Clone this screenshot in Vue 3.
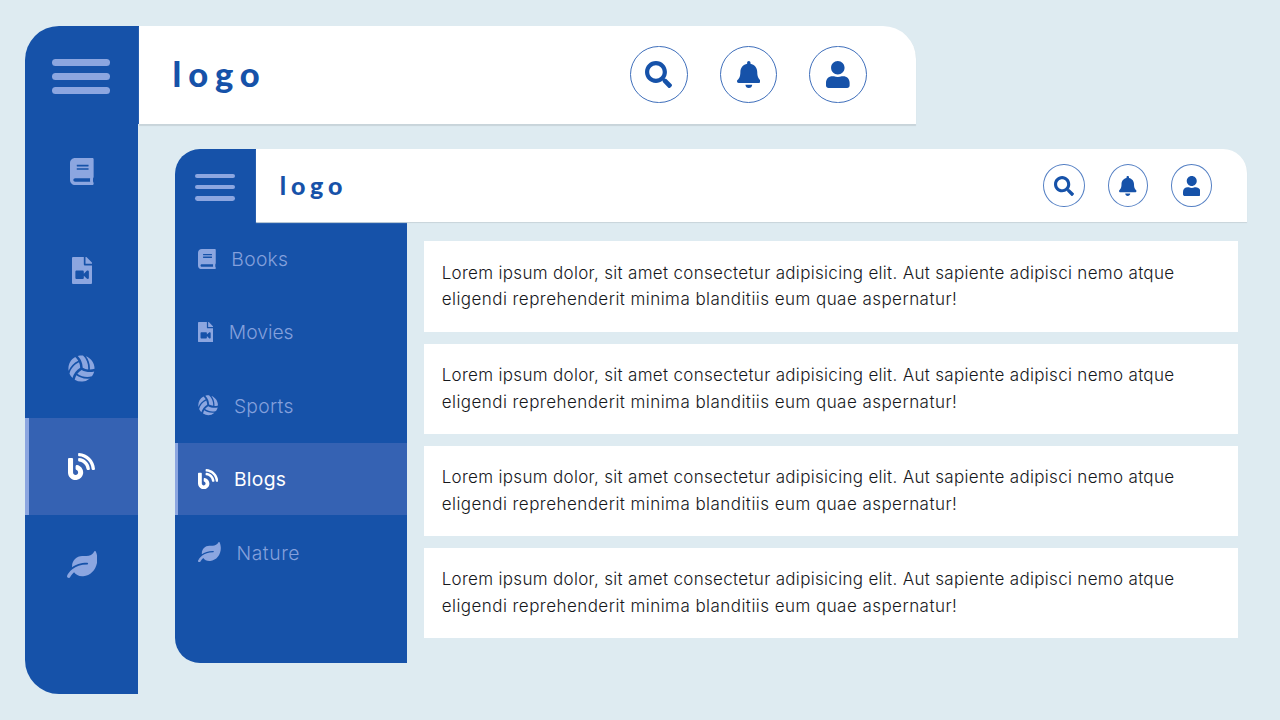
<script setup>
const icons = {
  search: { w: 512, d: 'M505 442.7L405.3 343c-4.5-4.5-10.6-7-17-7H372c27.6-35.3 44-79.7 44-128C416 93.1 322.9 0 208 0S0 93.1 0 208s93.1 208 208 208c48.3 0 92.7-16.4 128-44v16.3c0 6.4 2.5 12.5 7 17l99.7 99.7c9.4 9.4 24.6 9.4 33.9 0l28.3-28.3c9.4-9.4 9.4-24.6.1-34zM208 336c-70.7 0-128-57.2-128-128 0-70.7 57.2-128 128-128 70.7 0 128 57.2 128 128 0 70.7-57.2 128-128 128z' },
  bell: { w: 448, d: 'M224 512c35.32 0 63.97-28.65 63.97-64H160.03c0 35.35 28.65 64 63.97 64zm215.39-149.71c-19.32-20.76-55.47-51.99-55.47-154.29 0-77.7-54.48-139.9-127.94-155.16V32c0-17.67-14.32-32-31.98-32s-31.98 14.33-31.98 32v20.84C118.56 68.1 64.08 130.3 64.08 208c0 102.3-36.15 133.53-55.47 154.29-6 6.45-8.66 14.16-8.61 21.71.11 16.4 12.98 32 32.1 32h383.8c19.12 0 32-15.6 32.1-32 .05-7.55-2.61-15.27-8.61-21.71z' },
  user: { w: 448, d: 'M224 256c70.7 0 128-57.3 128-128S294.7 0 224 0 96 57.3 96 128s57.3 128 128 128zm89.6 32h-16.7c-22.2 10.2-46.9 16-72.9 16s-50.6-5.8-72.9-16h-26.7C50 288 0 338 0 412.4V464c0 26.5 21.5 48 48 48h352c26.5 0 48-21.5 48-48v-51.6c0-74.4-50-124.4-124.4-124.4z' },
  book: { w: 448, d: 'M448 360V24c0-13.3-10.7-24-24-24H96C43 0 0 43 0 96v320c0 53 43 96 96 96h328c13.3 0 24-10.7 24-24v-16c0-7.5-3.5-14.3-8.9-18.7-4.2-15.4-4.2-59.3 0-74.7 5.4-4.3 8.9-11.1 8.9-18.6zM128 134c0-3.3 2.7-6 6-6h212c3.3 0 6 2.7 6 6v20c0 3.3-2.7 6-6 6H134c-3.3 0-6-2.7-6-6v-20zm0 64c0-3.3 2.7-6 6-6h212c3.3 0 6 2.7 6 6v20c0 3.3-2.7 6-6 6H134c-3.3 0-6-2.7-6-6v-20zm253.4 250H96c-17.7 0-32-14.3-32-32 0-17.6 14.4-32 32-32h285.4c-1.9 17.1-1.9 46.9 0 64z' },
  film: { w: 384, d: 'M384 121.941V128H256V0h6.059c6.365 0 12.47 2.529 16.971 7.029l97.941 97.941A24.005 24.005 0 0 1 384 121.941zM224 136c0 13.2 10.8 24 24 24h136v328c0 13.255-10.745 24-24 24H24c-13.255 0-24-10.745-24-24V24C0 10.745 10.745 0 24 0h200v136zm96 144.016v111.963c0 21.445-25.943 31.998-40.971 16.971L224 353.941V392c0 13.255-10.745 24-24 24H88c-13.255 0-24-10.745-24-24V280c0-13.255 10.745-24 24-24h112c13.255 0 24 10.745 24 24v38.059l55.029-55.013c15.011-15.01 40.971-4.491 40.971 16.97z' },
  ball: { w: 512, d: 'M231.39 243.48a285.56 285.56 0 0 0-22.7-105.7c-90.8 42.4-157.5 122.4-180.3 216.8a249 249 0 0 0 56.9 81.1 333.87 333.87 0 0 1 146.1-192.2zm-36.9-134.4a284.23 284.23 0 0 0-57.4-70.7c-91 49.8-144.8 152.9-125 262.2 33.4-83.1 98.4-152 182.4-191.5zm187.6 165.1c8.6-99.8-27.3-197.5-97.5-264.4-14.7-1.7-51.6-5.5-98.9 8.5A333.87 333.87 0 0 1 279.19 241a285 285 0 0 0 102.9 33.18zm-124.7 9.5a286.33 286.33 0 0 0-80.2 72.6c82 57.3 184.5 75.1 277.5 47.8a247.15 247.15 0 0 0 42.2-89.9 336.1 336.1 0 0 1-80.9 10.4c-54.6-.1-108.9-14.1-158.6-40.9zm-98.3 99.7c-15.2 26-25.7 54.4-32.1 84.2a247.07 247.07 0 0 0 289-22.1c-112.9 16.1-203.3-24.8-256.9-62.1zm180.3-360.6c55.3 70.4 82.5 161.2 74.6 253.6a286.59 286.59 0 0 0 89.7-14.2c0-2 .3-4 .3-6 0-107.8-68.7-199.1-164.6-233.4z' },
  blog: { w: 512, d: 'M172.2 226.8c-14.6-2.9-28.2 8.9-28.2 23.8V301c0 10.2 7.1 18.4 16.7 22 18.2 6.8 31.3 24.4 31.3 45 0 26.5-21.5 48-48 48s-48-21.5-48-48V120c0-13.3-10.7-24-24-24H24c-13.3 0-24 10.7-24 24v248c0 89.5 82.1 160.2 175 140.7 54.4-11.4 98.3-55.4 109.7-109.7 17.4-82.9-37-157.2-112.5-172.2zM209 0c-9.2-.5-17 6.8-17 16v31.6c0 8.5 6.6 15.5 15 15.9 129.4 7 233.4 112 240.9 241.5.5 8.4 7.5 15 15.9 15h32.1c9.2 0 16.5-7.8 16-17C503.4 139.8 372.2 8.6 209 0zm.3 96c-9.3-.7-17.3 6.7-17.3 16.1v32.1c0 8.4 6.5 15.3 14.8 15.9 76.8 6.3 138 68.2 144.9 145.2.8 8.3 7.6 14.7 15.9 14.7h32.2c9.3 0 16.8-8 16.1-17.3-8.4-110.1-96.5-198.2-206.6-206.7z' },
  leaf: { w: 576, d: 'M546.2 9.7c-5.6-12.5-21.6-13-28.3-1.2C486.9 62.4 431.4 96 368 96h-80C182 96 96 182 96 288c0 7 .8 13.7 1.5 20.5C161.3 262.8 253.4 224 384 224c8.8 0 16 7.2 16 16s-7.2 16-16 16C132.6 256 26 410.1 2.4 468c-6.6 16.3 1.2 34.9 17.5 41.6 16.4 6.8 35-1.1 41.8-17.3 1.5-3.6 20.9-47.9 71.9-90.6 32.4 43.9 94 85.8 174.9 77.2C465.5 467.5 576 326.7 576 154.3c0-50.2-10.8-102.2-29.8-144.6z' }
}
const menu = [
  { icon: 'book', label: 'Books' },
  { icon: 'film', label: 'Movies' },
  { icon: 'ball', label: 'Sports' },
  { icon: 'blog', label: 'Blogs', active: true },
  { icon: 'leaf', label: 'Nature' }
]
const actions = ['search', 'bell', 'user']
</script>

<template>
  <main class="stage">
    <section v-for="size in ['large', 'small']" :key="size" class="window" :class="size">
      <header class="header">
        <div class="burger"><i></i><i></i><i></i></div>
        <div class="bar">
          <span class="logo">logo</span>
          <nav class="actions">
            <span v-for="a in actions" :key="a" class="circle" :class="a">
              <svg class="icon" :viewBox="`0 0 ${icons[a].w} 512`" :class="'w' + icons[a].w"><path :d="icons[a].d" /></svg>
            </span>
          </nav>
        </div>
      </header>
      <div class="body">
        <nav class="side">
          <a v-for="m in menu" :key="m.label" class="item" :class="{ active: m.active }">
            <svg class="icon" :viewBox="`0 0 ${icons[m.icon].w} 512`" :class="'w' + icons[m.icon].w"><path fill-rule="evenodd" :d="icons[m.icon].d" /></svg>
            <span v-if="size === 'small'" class="label" :class="m.icon">{{ m.label }}</span>
          </a>
        </nav>
        <div v-if="size === 'small'" class="cards">
          <article v-for="n in 4" :key="n" class="card">
            <span class="line first">Lorem ipsum dolor, sit amet consectetur adipisicing elit. Aut sapiente adipisci nemo atque </span>
            <span class="line second">eligendi reprehenderit minima blanditiis eum quae aspernatur!</span>
          </article>
        </div>
      </div>
    </section>
  </main>
</template>

<style>
html, body { margin: 0; background: #deebf1; }
</style>

<style scoped>
.stage { position: relative; width: 1280px; height: 720px; overflow: hidden; background: #deebf1; font-family: Inter, "Liberation Sans", sans-serif; }
.window { position: absolute; display: flex; flex-direction: column; box-sizing: border-box; }
.header { display: flex; flex: none; position: relative; }
.burger { box-sizing: border-box; flex: none; display: flex; flex-direction: column; background: #1652a9; }
.burger i { display: block; background: #8ca6e0; }
.bar { flex: 1; display: flex; align-items: center; justify-content: space-between; background: #fff; box-sizing: border-box; }
.logo { font-family: Lato, "Liberation Sans", sans-serif; font-weight: 900; color: #1652a9; line-height: 1; }
.actions { display: flex; }
.circle { display: flex; align-items: center; justify-content: center; box-sizing: border-box; border-radius: 50%; color: #1652a9; }
.icon { display: block; flex: none; height: 1em; fill: currentColor; }
.w384 { width: .75em; }
.w448 { width: .875em; }
.w512 { width: 1em; }
.w576 { width: 1.125em; }
.body { flex: 1; display: flex; min-height: 0; }
.side { background: #1652a9; box-sizing: border-box; display: flex; flex-direction: column; flex: none; }
.item { display: flex; align-items: center; box-sizing: border-box; color: #8ca6e0; flex: none; border-left: 0 solid transparent; }
.item.active { background: #3562b3; color: #fff; border-left-color: #8ca6e0; }

.large { left: 25px; top: 26.4px; width: 891px; height: 667.8px; }
.large .header { height: 98px; }
.large .burger { width: 113.6px; padding: 32.2px 0 0 27.4px; gap: 7.4px; border-top-left-radius: 34px; }
.large .burger i { width: 57.8px; height: 7px; border-radius: 3.5px; }
.large .bar { border-top-right-radius: 33px; padding: 0 49.4px 2px 34px; box-shadow: 0 1.5px 1px #c8d4da; }
.large .logo { font-size: 34.5px; letter-spacing: 6.9px; }
.large .actions { gap: 32px; }
.large .circle { width: 57.5px; height: 57.5px; border: 1.4px solid #3f6fbb; font-size: 27px; }
.large .body { margin-top: -.8px; }
.large .side { width: 113.4px; gap: 1.3px; border-bottom-left-radius: 34px; }
.large .item { height: 96.8px; border-left-width: 4px; padding-right: 4px; justify-content: center; font-size: 27px; }

.small { left: 175px; top: 149.4px; width: 1071.6px; height: 513.4px; }
.small .header { height: 73px; z-index: 1; }
.small .burger { width: 81.3px; padding: 24.2px 0 0 20px; gap: 6.3px; border-top-left-radius: 25px; }
.small .burger i { width: 40px; height: 4.8px; border-radius: 2.4px; }
.small .bar { border-top-right-radius: 24px; padding: 0 34.4px 0 23.5px; box-shadow: 0 1px 1px #c8d4da; }
.small .logo { font-size: 25px; letter-spacing: 4.8px; }
.small .actions { gap: 23px; }
.small .circle { width: 41.3px; height: 43px; border: 1.2px solid #5580c4; font-size: 20px; }
.small .circle.bell { width: 40.2px; }
.small .side { width: 231.9px; gap: .8px; border-bottom-left-radius: 25px; }
.small .item { height: 72.6px; border-left-width: 3.6px; padding-left: 20px; font-size: 20.3px; }
.small .label { margin-left: 15.6px; font-size: 19.3px; font-weight: 300; line-height: 1; color: #84a0dc; position: relative; top: 1px; letter-spacing: 0; }
.small .active .label { color: #fff; font-weight: 400; letter-spacing: .3px; }
.small .label.book { letter-spacing: .3px; }
.small .label.leaf { letter-spacing: .6px; }
.small .label.ball { letter-spacing: .3px; }
.cards { display: flex; flex-direction: column; gap: 12.1px; padding: 19px 8.4px 0 17.6px; flex: 1; }
.card { box-sizing: border-box; flex: none; height: 90.2px; padding: 18.2px 0 0 17.2px; background: #fff; color: #16181c; font-size: 17px; font-weight: 300; line-height: 26.7px; white-space: nowrap; }
.line { display: block; }
.first { letter-spacing: .312px; }
.second { letter-spacing: .45px; }
</style>
